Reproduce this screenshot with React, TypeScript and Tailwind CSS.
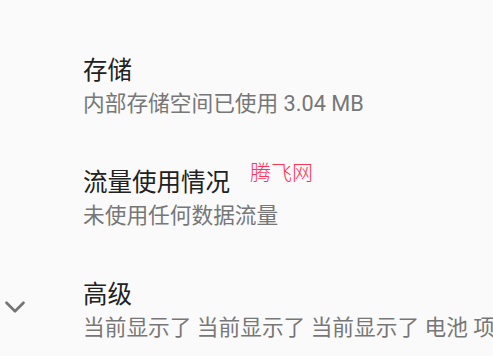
import { ChevronDown } from 'lucide-react'

const rows = [
  { title: '存储', summary: '内部存储空间已使用 3.04 MB' },
  { title: '流量使用情况', summary: '未使用任何数据流量' },
  { title: '高级', summary: '当前显示了 当前显示了 当前显示了 电池 项目', icon: true },
]

export default function App() {
  return (
    <div
      className="relative w-[493px] h-[356px] overflow-hidden bg-[#fafafa] pt-[55px]"
      style={{ fontFamily: 'Roboto, "Noto Sans CJK SC", sans-serif' }}
    >
      {rows.map((row) => (
        <div key={row.title} className="flex h-[112px] items-start">
          <div className="w-[83px] shrink-0 flex justify-start pt-[11px]">
            {row.icon && (
              <ChevronDown className="w-[34px] h-[34px] -ml-[2px] text-[#757575]" strokeWidth={1.9} />
            )}
          </div>
          <div className="flex flex-col min-w-0 whitespace-nowrap">
            <span className="text-[24.5px] leading-[32px] text-[#212121]">{row.title}</span>
            <span className="mt-[3px] text-[21.7px] leading-[28px] text-[#777777]">{row.summary}</span>
          </div>
        </div>
      ))}

      {/* watermark */}
      <span
        className="absolute left-[250px] top-[161px] text-[21px] leading-[21px] font-light text-[#ff3355]"
        style={{ fontFamily: '"Noto Sans CJK SC", serif' }}
      >
        腾飞网
      </span>
    </div>
  )
}
